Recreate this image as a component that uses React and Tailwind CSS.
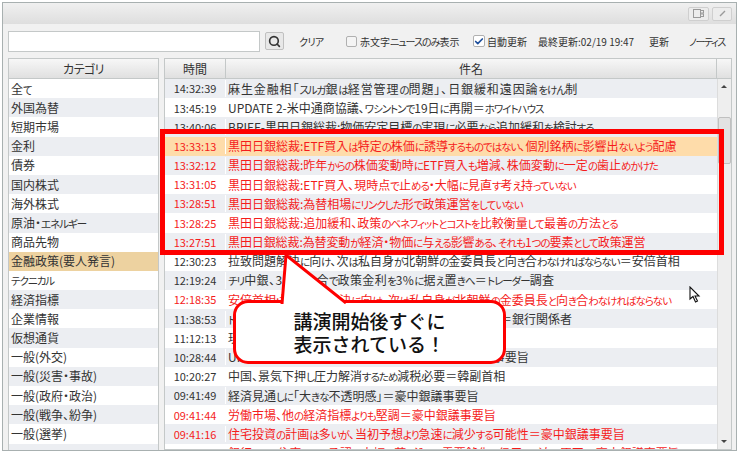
import { Search, Check } from "lucide-react";

const categories = [
  "全て",
  "外国為替",
  "短期市場",
  "金利",
  "債券",
  "国内株式",
  "海外株式",
  "原油・エネルギー",
  "商品先物",
  "金融政策(要人発言)",
  "テクニカル",
  "経済指標",
  "企業情報",
  "仮想通貨",
  "一般(外交)",
  "一般(災害・事故)",
  "一般(政府・政治)",
  "一般(戦争、紛争)",
  "一般(選挙)",
  "",
];

const news = [
  ["14:32:39", "麻生金融相「スルガ銀は経営管理の問題」、日銀緩和遠因論をけん制", false, "tracking-[0.9px]"],
  ["13:45:19", "UPDATE 2-米中通商協議、ワシントンで19日に再開＝ホワイトハウス", false],
  ["13:40:06", "BRIEF-黒田日銀総裁:物価安定目標の実現に必要なら追加緩和を検討する", false],
  ["13:33:13", "黒田日銀総裁:ETF買入は特定の株価に誘導するものではない、個別銘柄に影響出ないよう配慮", true],
  ["13:32:12", "黒田日銀総裁:昨年からの株価変動時にETF買入も増減、株価変動に一定の歯止めかけた", true],
  ["13:31:05", "黒田日銀総裁:ETF買入、現時点で止める・大幅に見直す考え持っていない", true],
  ["13:28:51", "黒田日銀総裁:為替相場にリンクした形で政策運営をしていない", true],
  ["13:28:25", "黒田日銀総裁:追加緩和、政策のベネフィットとコストを比較衡量して最善の方法とる", true],
  ["13:27:51", "黒田日銀総裁:為替変動が経済・物価に与える影響ある、それも1つの要素として政策運営", true, "tracking-[-0.1px]"],
  ["12:30:23", "拉致問題解決に向け、次は私自身が北朝鮮の金委員長と向き合わなければならない＝安倍首相", false],
  ["12:19:24", "チリ中銀、3月の会合で政策金利を3%に据え置きへ＝トレーダー調査", false, "tracking-[0.4px]"],
  ["12:18:35", "安倍首相:拉致問題解決に向け、次は私自身が北朝鮮の金委員長と向き合わなければならない", true],
  ["11:38:53", "トルコ中銀、来週の政策会合で政策金利を据え置く見通し＝銀行関係者", false],
  ["11:12:13", "現在の金融政策を維持", false],
  ["10:28:44", "UPDATE 1-豪中銀、当面は金利を据え置きの方針＝議事要旨", false],
  ["10:20:27", "中国、景気下押し圧力解消するため減税必要＝韓副首相", false],
  ["09:41:49", "経済見通しに「大きな不透明感」＝豪中銀議事要旨", false],
  ["09:41:44", "労働市場、他の経済指標よりも堅調＝豪中銀議事要旨", true],
  ["09:41:16", "住宅投資の計画は多いが、当初予想より急速に減少する可能性＝豪中銀議事要旨", true],
  ["09:40:00", "銀行による住宅ローン承認の大幅な落ち込み、需要鈍化と信用ひっ迫が原因＝豪中銀議事要旨", true],
];

// the original UI font has very narrow kana, so those runs get squeezed
const Narrow = ({ text, kanaClass = "text-[10.5px] tracking-[-1px]" }) =>
  text.split(/([ぁ-んァ-ヶー]+)/).map((part, i) =>
    i % 2 === 1 ? (
      <span key={i} className={kanaClass}>
        {part}
      </span>
    ) : (
      part
    )
  );

const headerClass =
  "h-[20px] shrink-0 flex items-center justify-center bg-gradient-to-b from-[#f7f7f7] to-[#e0e0e0] border-b border-[#c4c8c8] text-[12px] text-[#333]";

const rowBg = (i) => (i % 2 === 0 ? "bg-[#eceef2]" : "bg-white");

const App = () => {
  return (
    <div
      className="relative w-[740px] h-[454px] overflow-hidden bg-white pt-[2px] pl-[2px] pr-[3px] pb-[3px] text-[12px] text-[#333] [font-feature-settings:'palt']"
      style={{ fontFamily: '"Noto Sans CJK JP", "Noto Sans", sans-serif' }}
    >
      <div className="h-full flex flex-col border border-[#a8b0b0] bg-[#f1f1f1]">
        {/* Title bar */}
        <div className="h-[21px] shrink-0 flex items-center justify-end gap-[3px] pr-[4px] bg-gradient-to-b from-[#f0f0f0] to-[#dedede]">
          <div className="w-[21px] h-[14px] flex items-center justify-center border border-[#cfcfcf] rounded-[2px] bg-[#ececec]">
            <svg width="11" height="9" viewBox="0 0 11 9" fill="none" stroke="#9a9a9a">
              <rect x="0.5" y="0.5" width="7" height="8" />
              <rect x="7.5" y="1.5" width="3" height="2.5" />
              <rect x="7.5" y="5" width="3" height="2.5" />
            </svg>
          </div>
          <div className="w-[20px] h-[14px] flex items-center justify-center border border-[#cfcfcf] rounded-[2px] bg-[#ececec]">
            <svg width="9" height="9" viewBox="0 0 9 9" fill="none" stroke="#9a9a9a" strokeWidth="1.4">
              <path d="M7 2 L3 6 M3 6 L2 7" />
            </svg>
          </div>
        </div>

        {/* Toolbar */}
        <div className="h-[34px] shrink-0 flex items-center pl-[5px] text-[10px] whitespace-nowrap">
          <div className="w-[252px] h-[21px] shrink-0 bg-white border border-[#c4c8c8]" />
          <button className="ml-[5px] w-[19px] h-[18px] shrink-0 flex items-center justify-center bg-[#e8e8e8] border border-[#c0c0c0] rounded-[2px]">
            <Search size={13} strokeWidth={3} className="text-[#333]" />
          </button>
          <span className="ml-[15px] w-[20px]"><Narrow text="クリア" kanaClass="tracking-[-0.6px]" /></span>
          <div className="ml-[27px] w-[11px] h-[11px] shrink-0 rounded-[2px] border border-[#b0b0b0] bg-[#f4f4f4]" />
          <span className="ml-[3px] w-[98px]"><Narrow text="赤文字ニュースのみ表示" kanaClass="tracking-[-1px]" /></span>
          <div className="ml-[15px] w-[12px] h-[12px] shrink-0 flex items-center justify-center rounded-[2px] border border-[#b0b0b0] bg-white">
            <Check size={11} strokeWidth={4} className="text-[#1e4f9c]" />
          </div>
          <span className="ml-[2px] w-[40px]">自動更新</span>
          <span className="ml-[11px] w-[96px]">最終更新:02/19 19:47</span>
          <span className="ml-[15px] w-[20px]">更新</span>
          <span className="ml-[20px]"><Narrow text="ノーティス" kanaClass="tracking-[-1.4px]" /></span>
        </div>

        {/* Panels */}
        <div className="flex-1 min-h-0 flex pl-[5px] pr-[4px] gap-[5px]">
          <div className="w-[151px] shrink-0 flex flex-col overflow-hidden bg-white border border-b-0 border-[#c4c8c8]">
            <div className={headerClass}><Narrow text="カテゴリ" kanaClass="tracking-[-0.6px]" /></div>
            {categories.map((name, i) => (
              <div
                key={i}
                className={`h-[19.2px] shrink-0 flex items-center pl-[2px] whitespace-nowrap text-[12px] ${
                  i === 9 ? "bg-[#edd2a0]" : i % 2 === 1 ? "bg-[#eceef2]" : "bg-white"
                }`}
              >
                <span><Narrow text={name} /></span>
              </div>
            ))}
          </div>

          <div className="flex-1 min-w-0 flex flex-col overflow-hidden bg-white border border-[#c4c8c8]">
            <div className="flex shrink-0">
              <div className={`${headerClass} w-[61px] border-r`}>時間</div>
              <div className={`${headerClass} flex-1 border-r`}>件名</div>
              <div className={`${headerClass} w-[14px]`} />
            </div>
            <div className="flex-1 min-h-0 flex">
              <div className="flex-1 min-w-0 overflow-hidden">
                {news.map(([time, title, red, fit], i) => (
                  <div
                    key={time}
                    className={`h-[19.2px] flex items-center whitespace-nowrap ${
                      i === 3 ? "bg-[#fedcaa]" : rowBg(i)
                    } ${red ? "text-[#f51c1c]" : ""}`}
                  >
                    <div className="w-[61px] shrink-0 text-center text-[11px] border-r border-white">{time}</div>
                    <div className={`pl-[2px] text-[12px] ${fit || ""}`}><Narrow text={title} /></div>
                  </div>
                ))}
              </div>
              {/* Scrollbar */}
              <div className="relative w-[14px] shrink-0 bg-[#eeeeee] border-l border-[#dcdcdc]">
                <div className="absolute top-[6px] left-[3px] w-0 h-0 border-x-[3px] border-x-transparent border-b-[3px] border-b-[#444]" />
                <div className="absolute top-[38px] left-[0px] w-[13px] h-[47px] rounded-[2px] bg-[#e2e2e2] border border-[#c0c0c0]" />
                <div className="absolute bottom-[6px] left-[3px] w-0 h-0 border-x-[3px] border-x-transparent border-t-[3px] border-t-[#444]" />
              </div>
            </div>
          </div>
        </div>
      </div>

      {/* Red highlight box */}
      <div className="absolute left-[160px] top-[129px] w-[564px] h-[126px] border-[5px] border-[#fe0000]" />

      {/* Mouse cursor */}
      <svg className="absolute left-[689px] top-[286px]" width="12" height="18" viewBox="0 0 12 18">
        <path d="M1 1 L1 13 L4 10.5 L6.5 16 L8.5 15 L6 10 L10 10 Z" fill="#fff" stroke="#111" strokeWidth="1.1" />
      </svg>

      {/* Callout */}
      <div className="absolute left-[233px] top-[300px] w-[273px] h-[64px] flex flex-col items-center justify-center bg-white border-[3px] border-[#fe0000] rounded-[15px] text-[#111] text-[19px] font-medium leading-[23px] [font-feature-settings:normal]">
        <div className="w-[152px] whitespace-nowrap">講演開始後すぐに</div>
        <div className="w-[152px] whitespace-nowrap">表示されている！</div>
      </div>
      <svg className="absolute left-[278px] top-[252px]" width="72" height="52" viewBox="0 0 72 52">
        <path d="M4 52 L8 3 L68 51" fill="#fff" stroke="#fe0000" strokeWidth="3" />
      </svg>
    </div>
  );
};

export default App;
